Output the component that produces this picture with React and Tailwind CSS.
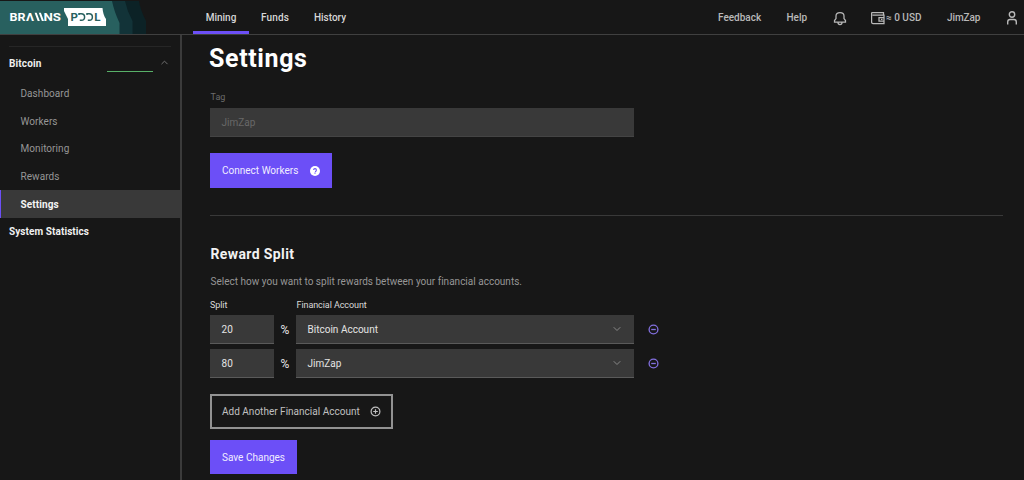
import React from "react";
import { ChevronDown, ChevronUp } from "lucide-react";

const subItems = ["Dashboard", "Workers", "Monitoring", "Rewards"];

function Logo() {
  return (
    <svg width="150" height="33" viewBox="0 0 150 33" className="block">
      <path d="M125 0H139Q140 8 146 20V33H125Z" fill="#0c2226" />
      <path d="M105 0H125Q127 10 132.500 20V33H105Z" fill="#123338" />
      <path d="M0 0H112Q114 10 119.500 22V33H0Z" fill="#28605f" />
      <g fill="#fff" className="font-['Roboto','Liberation_Sans',sans-serif] text-[11.500px] font-bold">
        <text x="9.500" y="20" textLength="16" lengthAdjust="spacingAndGlyphs">BR</text>
        <text x="26" y="20" textLength="8" lengthAdjust="spacingAndGlyphs">Λ</text>
        <text x="43.500" y="20" textLength="17.500" lengthAdjust="spacingAndGlyphs">NS</text>
      </g>
      <path d="M34.600 11.800H36.700L39.800 20H37.700ZM38.800 11.800H40.900L44 20H41.900Z" fill="#fff" />
      <path d="M64 7H102.500Q103 14 106 18V25H68V18Q66 14 64 10Z" fill="#fff" />
      <g fill="#28605f" className="font-['Roboto','DejaVu_Sans',sans-serif] text-[11.500px] font-bold">
        <text x="70.500" y="20">P</text>
        <text x="94.200" y="20">L</text>
      </g>
      <path d="M79 14V12.700H81.200Q84.600 12.700 84.600 16T81.200 19.200H79.800M87 14V12.700H89.200Q92.400 12.700 92.400 16T89.200 19.200H87.800" fill="none" stroke="#28605f" strokeWidth="1.500" />
    </svg>
  );
}

function Header() {
  return (
    <header className="flex h-[35px] shrink-0 items-start border-b border-[#404040] text-[10px] font-medium text-[#b9b9b9]">
      <div className="w-[193px] pt-px">
        <Logo />
      </div>
      <nav className="flex h-[34px] items-stretch text-[#d6d6d6]">
        <a className="flex w-14 justify-center border-b-[3px] border-[#6c4ff7] pt-[9.500px] leading-4">Mining</a>
        <a className="flex w-[52px] justify-center pt-[9.500px] leading-4 tracking-[0.1px]">Funds</a>
        <a className="flex w-[58px] justify-center pt-[9.500px] leading-4">History</a>
      </nav>
      <div className="ml-auto flex pt-[9.500px] leading-4">
        <a className="w-[68.500px]">Feedback</a>
        <a className="w-[46.500px]">Help</a>
        <svg width="14" height="16" viewBox="0 0 14 16" fill="none" stroke="currentColor" strokeWidth="1.250" className="mr-6">
          <path d="M1.500 12V10.500L3 8.500V6Q3 2.500 7 2.500T11 6V8.500L12.500 10.500V12ZM5 12.500Q5 14.500 7 14.500T9 12.500" />
        </svg>
        <svg width="15" height="16" viewBox="0 0 15 16" fill="none" stroke="currentColor" strokeWidth="1.250">
          <path d="M12.500 4.500V2.500H1Q0.600 2.500 0.600 3.500V12Q0.600 13.500 2 13.500H13V5H1.500M13 7.500H8V11H13M10 9.300H11.500" />
        </svg>
        <a className="w-[61px]">≈ 0 USD</a>
        <a className="w-[59px] tracking-[-0.100px]">JimZap</a>
        <svg width="12" height="16" viewBox="0 0 12 16" fill="none" stroke="currentColor" strokeWidth="1.400" className="mr-1.5">
          <circle cx="6" cy="4.500" r="2.700" />
          <path d="M1.700 14.500V12Q1.700 9.500 4 9.500H8Q10.300 9.500 10.300 12V14.500" />
        </svg>
      </div>
    </header>
  );
}

function Sidebar() {
  return (
    <aside className="w-[182px] shrink-0 border-r-2 border-[#3b3b3b] pt-[11px] text-[10px] leading-4">
      <div className="mx-[9px] flex h-[34px] items-start justify-between border-t border-[#262626] pt-[9px]">
        <b className="font-bold tracking-[0.150px] text-[#f0f0f0]">Bitcoin</b>
        <span className="flex">
          <span className="mr-[6px] mt-[14.500px] h-[1.500px] w-[46px] bg-[#58b068]" />
          <ChevronUp size={11} strokeWidth={2} className="mr-px mt-px text-[#777]" />
        </span>
      </div>
      {subItems.map((label) => (
        <a key={label} className="flex h-[27.500px] items-center pl-[20.500px] pt-px font-normal tracking-[0.060px] text-[#969696]">
          {label}
        </a>
      ))}
      <a className="flex h-7 items-center border-l border-[#6c4ff7] bg-[#393939] pl-[19.500px] pt-px font-bold tracking-[0.100px] text-[#f4f4f4]">Settings</a>
      <a className="flex h-[27px] items-center pl-[9px] pt-px font-bold tracking-[0.080px] text-[#f0f0f0]">System Statistics</a>
    </aside>
  );
}

function SplitRow({ value, account }) {
  return (
    <div className="mb-[5px] flex h-[29px] items-center text-[#e4e4e4]">
      <div className="flex h-full w-16 items-center border-b border-[#5a5a5a] bg-[#393939] pl-[11.500px] tracking-[0.200px]">{value}</div>
      <span className="w-[22px] text-center text-[12px]">%</span>
      <div className="flex h-full w-[338px] items-center justify-between border-b border-[#5a5a5a] bg-[#393939] pl-[11.500px] pr-[11px]">
        {account}
        <ChevronDown size={12} strokeWidth={2} className="text-[#888]" />
      </div>
      <svg width="11" height="11" viewBox="0 0 11 11" fill="none" stroke="#8370e0" strokeWidth="1.300" className="ml-[14px]">
        <circle cx="5.500" cy="5.500" r="4.400" />
        <path d="M3.200 5.500H7.800" />
      </svg>
    </div>
  );
}

export default function App() {
  return (
    <div className="flex h-[480px] w-[1024px] flex-col overflow-hidden bg-[#171717] font-['Roboto','Liberation_Sans',sans-serif]">
      <Header />
      <div className="flex min-h-0 flex-1">
        <Sidebar />
        <main className="w-[821px] pl-7 text-[10px] font-normal tracking-[0.010px]">
          <h1 className="-ml-px h-[55px] pt-2 text-[25px] font-bold leading-8 tracking-[0.620px] text-white">Settings</h1>
          <label className="block h-[18px] pl-[0.500px] text-[9px] leading-[14px] text-[#6c6c6c]">Tag</label>
          <div className="flex h-[29px] w-[424px] items-center border-b border-[#444] bg-[#393939] pl-[11.500px] text-[#686868]">JimZap</div>
          <button className="mt-4 flex h-[35px] w-[122px] items-center justify-between bg-[#6c4ff7] px-3 text-[#f0edff]">
            Connect Workers
            <svg width="10" height="10" viewBox="0 0 10 10">
              <circle cx="5" cy="5" r="5" fill="#fff" />
              <path d="M3.600 4Q3.600 2.600 5 2.600T6.400 4T5 5.700M5 6.600V7.700" fill="none" stroke="#6c4ff7" strokeWidth="1.100" />
            </svg>
          </button>
          <div className="mt-[27px] border-t border-[#393939]" />
          <h2 className="pl-[0.500px] pt-[29px] text-[14px] font-bold leading-[18px] tracking-[0.380px] text-[#f2f2f2]">Reward Split</h2>
          <p className="mt-[10.500px] pl-[0.500px] leading-4 text-[#969696]">Select how you want to split rewards between your financial accounts.</p>
          <div className="mt-[7.500px] flex h-[18px] text-[9px] leading-[17px] tracking-[-0.080px] text-[#dadada]">
            <span className="w-[86.500px]">Split</span>
            <span>Financial Account</span>
          </div>
          <SplitRow value="20" account="Bitcoin Account" />
          <SplitRow value="80" account="JimZap" />
          <button className="mt-4 flex h-[35px] w-[183px] items-center justify-between border-2 border-[#929292] px-[10px] text-[#c0c0c0]">
            Add Another Financial Account
            <svg width="11" height="11" viewBox="0 0 11 11" fill="none" stroke="currentColor" strokeWidth="1.200">
              <circle cx="5.500" cy="5.500" r="4.400" />
              <path d="M3.200 5.500H7.800M5.500 3.200V7.800" />
            </svg>
          </button>
          <button className="mt-[11px] flex h-[34px] w-[87px] items-center whitespace-nowrap bg-[#6c4ff7] px-3 text-[#f0edff]">Save Changes</button>
        </main>
      </div>
    </div>
  );
}
